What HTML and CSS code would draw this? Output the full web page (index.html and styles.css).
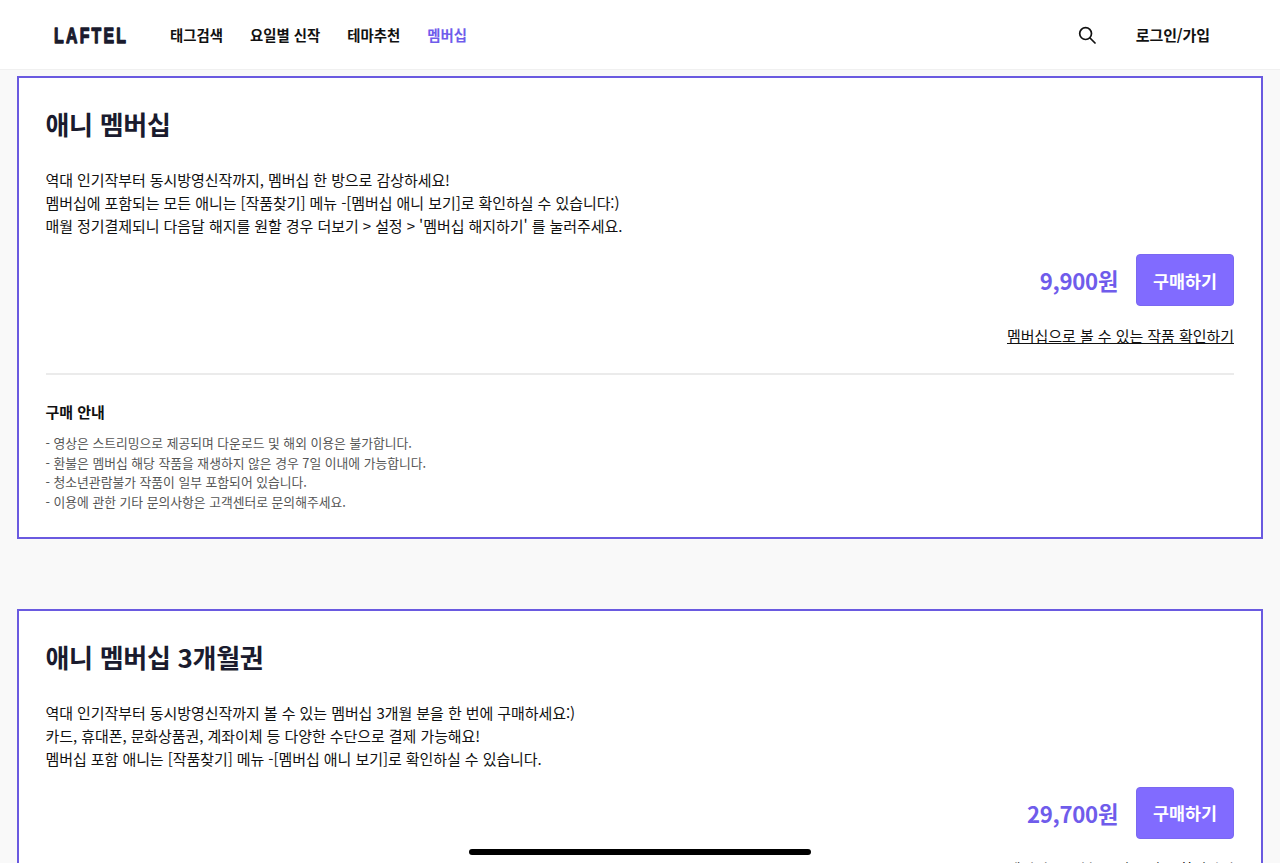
FILE: index.html
```html
<!DOCTYPE html>
<html lang="ko">
<head>
<meta charset="utf-8">
<title>LAFTEL 멤버십</title>
<link rel="stylesheet" href="styles.css">
</head>
<body>
<header class="header">
  <div class="header-left">
    <svg class="logo" width="76" height="24" viewBox="0 0 76 24" role="img" aria-label="LAFTEL"><text x="0" y="20" transform="translate(1 0) scale(.72 1)" textLength="100" lengthAdjust="spacing" class="logo-text">LAFTEL</text></svg>
    <nav class="nav">
      <a class="nav-item">태그검색</a>
      <a class="nav-item">요일별 신작</a>
      <a class="nav-item">테마추천</a>
      <a class="nav-item nav-active">멤버십</a>
    </nav>
  </div>
  <div class="header-right">
    <svg class="search" width="18" height="18" viewBox="0 0 18 18" fill="none" stroke="#111" stroke-width="1.7" stroke-linecap="round"><circle cx="7.6" cy="7.6" r="5.9"/><path d="M12 12l5 5"/></svg>
    <a class="login">로그인/가입</a>
  </div>
</header>
<main class="main">
  <section class="card">
    <h2 class="title">애니 멤버십</h2>
    <p class="desc">역대 인기작부터 동시방영신작까지, 멤버십 한 방으로 감상하세요!<br>멤버십에 포함되는 모든 애니는 [작품찾기] 메뉴 -[멤버십 애니 보기]로 확인하실 수 있습니다:)<br>매월 정기결제되니 다음달 해지를 원할 경우 더보기 &gt; 설정 &gt; '멤버십 해지하기' 를 눌러주세요.</p>
    <div class="buy-row"><span class="price">9,900원</span><button class="buy">구매하기</button></div>
    <div class="link-row"><a class="link">멤버십으로 볼 수 있는 작품 확인하기</a></div>
    <hr class="divider">
    <h3 class="guide-title">구매 안내</h3>
    <p class="guide">- 영상은 스트리밍으로 제공되며 다운로드 및 해외 이용은 불가합니다.<br>- 환불은 멤버십 해당 작품을 재생하지 않은 경우 7일 이내에 가능합니다.<br>- 청소년관람불가 작품이 일부 포함되어 있습니다.<br>- 이용에 관한 기타 문의사항은 고객센터로 문의해주세요.</p>
  </section>
  <section class="card">
    <h2 class="title">애니 멤버십 3개월권</h2>
    <p class="desc">역대 인기작부터 동시방영신작까지 볼 수 있는 멤버십 3개월 분을 한 번에 구매하세요:)<br>카드, 휴대폰, 문화상품권, 계좌이체 등 다양한 수단으로 결제 가능해요!<br>멤버십 포함 애니는 [작품찾기] 메뉴 -[멤버십 애니 보기]로 확인하실 수 있습니다.</p>
    <div class="buy-row"><span class="price">29,700원</span><button class="buy">구매하기</button></div>
    <div class="link-row"><a class="link">멤버십으로 볼 수 있는 작품 확인하기</a></div>
  </section>
</main>
<div class="home-bar"></div>
</body>
</html>
```

FILE: styles.css
```css
* { box-sizing: border-box; }
html, body { margin: 0; height: 863px; overflow: hidden; }
body {
  background: #f9f9f9;
  color: #111;
  font-family: "Noto Sans CJK KR", "Noto Sans", sans-serif;
}
.header {
  height: 70px;
  background: #fff;
  border-bottom: 1px solid #f0f0f0;
  display: flex;
  align-items: center;
  justify-content: space-between;
  padding: 0 70px 0 53px;
}
.header-left, .header-right, .nav { display: flex; align-items: center; }
.logo { display: block; margin-right: 41px; overflow: visible; }
.logo-text {
  font-family: "Liberation Sans", sans-serif;
  font-weight: 700;
  font-size: 22px;
  fill: #1a1b2e;
  stroke: #1a1b2e;
  stroke-width: 1.3px;
  stroke-linejoin: round;
}
.nav { gap: 27px; }
.nav-item { font-size: 14.4px; font-weight: 700; color: #111; }
.nav-active { color: #6f5ceb; }
.search { display: block; margin-right: 40px; }
.login { font-size: 15px; font-weight: 700; letter-spacing: -.1px; }
.main { padding: 6px 17px 0; }
.card {
  background: #fff;
  border: 2px solid #6a5ae0;
  padding: 26px 27px 20px 26.5px;
  margin-bottom: 69.5px;
  min-height: 463px;
}
.title {
  margin: 0 0 24px;
  font-size: 26px;
  line-height: 40px;
  font-weight: 700;
  color: #1a1b2e;
  letter-spacing: -.3px;
}
.desc { margin: 0 0 17px; font-size: 15px; line-height: 23px; letter-spacing: -.07px; color: #111; }
.buy-row { display: flex; justify-content: flex-end; align-items: center; gap: 18px; }
.price { font-size: 22.2px; font-weight: 700; color: #6f5ceb; letter-spacing: -.3px; }
.buy {
  width: 98px;
  height: 52px;
  background: #816bff;
  border: 1px solid #7a68f0;
  border-radius: 4px;
  color: #fff;
  font: 700 17.4px "Noto Sans CJK KR", sans-serif;
  padding: 0;
}
.link-row { display: flex; justify-content: flex-end; margin-top: 19px; }
.link { font-size: 15px; line-height: 22px; letter-spacing: -.05px; color: #111; text-decoration: underline; }
.divider { border: 0; height: 2px; background: #ebebeb; margin: 26px 0 26px; }
.guide-title { margin: 0 0 10px; font-size: 15px; line-height: 22px; font-weight: 700; color: #111; }
.guide { margin: 0; font-size: 12.8px; line-height: 19.5px; color: #555; }
.home-bar {
  position: fixed;
  left: 469px;
  top: 849px;
  width: 342px;
  height: 6px;
  border-radius: 3px;
  background: #000;
}
```
